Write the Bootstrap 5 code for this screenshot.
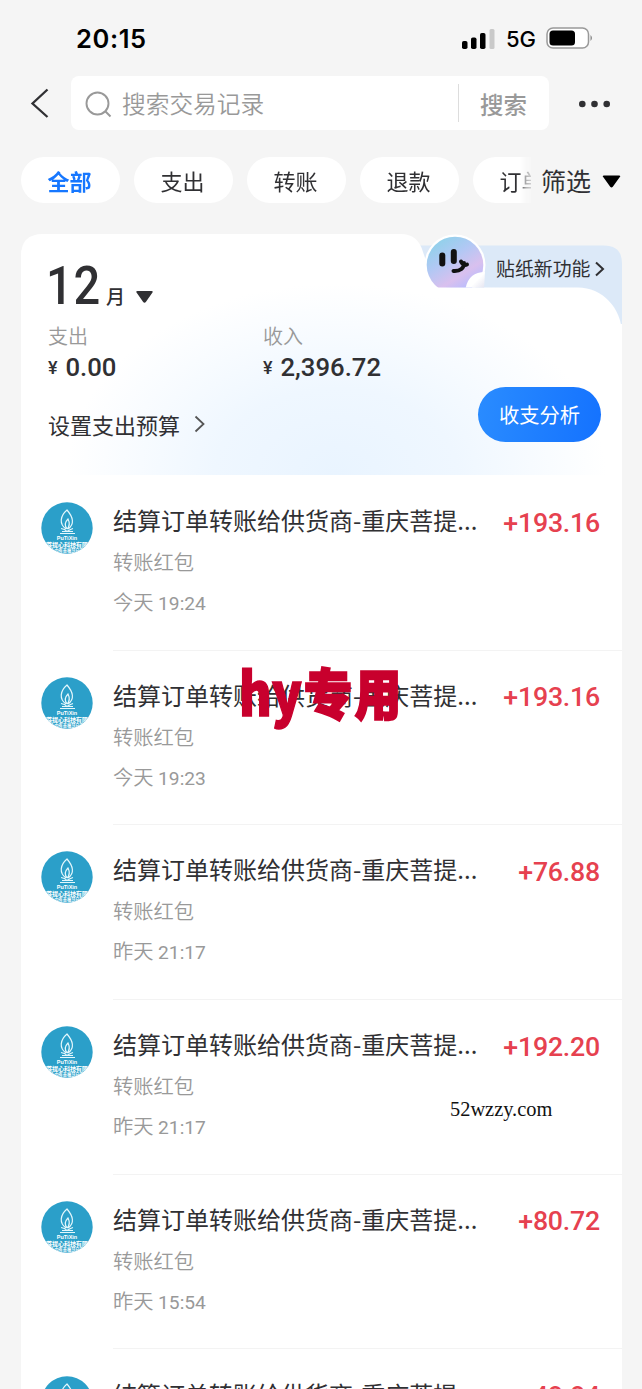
<!DOCTYPE html>
<html lang="zh-CN">
<head>
<meta charset="utf-8">
<meta name="viewport" content="width=device-width, initial-scale=1">
<title>账单</title>
<link href="https://cdn.jsdelivr.net/npm/bootstrap@5.3.0/dist/css/bootstrap.min.css" rel="stylesheet">
<style>
html,body{height:1389px;overflow:hidden}
body{background:#f5f5f5;color:#303033;font-family:"Noto Sans CJK SC",sans-serif;line-height:1}
svg{display:block;flex:none}
.phone{width:642px;height:1389px}
.clock{font:600 25.5px/30px Inter,sans-serif;color:#000;letter-spacing:.6px}
.net{font:500 22px/30px Inter,sans-serif;color:#000;margin-left:11px;width:40px}
.statusbar{height:76px;padding:24px 48px 0 76px}
.searchrow{height:54px;padding-left:30px}
.searchbox{width:478px;height:54px;border-radius:8px;margin-left:22px;color:#999}
.hint{font-size:23.7px;font-weight:350;color:#999;margin:2px 0 0 9px}
.vline{width:1px;height:38px;background:#ddd}
.go{font-size:23.5px;font-weight:500;color:#999;margin:4px 22px 0 21px}
.tabs-row{height:46px;margin-top:27px;padding-left:21px}
.tabs-clip{width:510px;gap:14px;-webkit-mask-image:linear-gradient(90deg,#000 498px,rgba(0,0,0,.35) 505px,rgba(0,0,0,.2) 510px);mask-image:linear-gradient(90deg,#000 498px,rgba(0,0,0,.35) 505px,rgba(0,0,0,.2) 510px)}
.tab{width:99px;height:46px;font-size:22px;background:#fff;padding:0 2px 1px 0}
.tab.on{color:#1677ff;font-weight:700}
.filter{font-size:25px;margin-left:10px}
.sheet{width:601px;margin:30.5px 0 0 21px;background:#fff;border-radius:22px 0 0 0}
.summary{height:241px}
.summary-bg{left:0;top:0}
.month{height:48px;margin:28px 0 0 25px}
.num{font-family:Roboto,sans-serif;font-weight:500}
.m-num{font-size:54px;line-height:48px;letter-spacing:1px;width:60px;transform:scaleX(.87);transform-origin:0 0}
.m-unit{font-size:19px;line-height:20px;font-weight:500;margin-bottom:4px}
.tip{left:475px;top:21px;font-size:18.9px;line-height:26px;white-space:nowrap}
.cap{font-size:20px;line-height:24px;color:#999;font-weight:350}
.sum{font-size:25.7px;line-height:30px;margin-top:4px}
.yen{font:500 18px/30px Roboto,sans-serif;width:17.5px;padding-top:1px}
.budget{font-size:22px;line-height:28px;margin:27.500px 0 0 27px}
.analysis{left:457px;top:153.5px;width:123px;height:55px;font-size:20.3px;color:#fff;background:linear-gradient(100deg,#2a8cff,#1472ff)}
.bill{height:174.7px;padding:27.6px 22px 0 19.6px}
.bill .info{margin-left:20.4px;flex:1}
.bill .ttl{font-size:24px;line-height:36px}
.bill .sub{font-size:20.3px;line-height:28px;color:#999;font-weight:350}
.bill .clk{font:400 19.2px/28px Roboto,sans-serif}
.bill .amt{font-size:26.7px;line-height:36px;color:#e6414f;letter-spacing:-.2px;margin-top:2.6px;height:33px}
.rule{left:92px;right:0;bottom:-1.5px;height:1px;background:#f3f3f3}
.stamp{left:239px;top:659px}
.site{left:450px;top:1096px;font:20.4px/26px "Liberation Serif",serif;color:#111}
</style>
</head>
<body>
<main class="phone position-relative overflow-hidden">
<header class="statusbar d-flex justify-content-between align-items-start">
  <div class="clock">20:15</div>
  <div class="d-flex align-items-center">
    <svg width="33" height="21" viewBox="0 0 33 21"><g fill="#000"><rect y="12" width="5.5" height="8" rx="1.8"/><rect x="9" y="8.500" width="5.5" height="11.5" rx="1.8"/><rect x="18" y="4" width="5.5" height="16" rx="1.8"/></g><rect x="27.500" width="5" height="20" rx="1.500" fill="#c9c9c9"/></svg>
    <div class="net">5G</div>
    <svg width="48" height="24" viewBox="0 0 48 24"><rect x="1" y="1" width="41.500" height="20" rx="6" fill="#fff" stroke="#999" stroke-width="1.500"/><rect x="3.500" y="3.500" width="25.500" height="15" rx="3.500"/><path d="M44.500 8q3 3 0 6z" fill="#888"/></svg>
  </div>
</header>

<div class="searchrow d-flex align-items-center">
  <svg width="19" height="30" viewBox="0 0 19 30" fill="none" stroke="#303033" stroke-width="2.300"><path d="M17.500 1.500 2.500 15.500l15 13.500"/></svg>
  <div class="searchbox bg-white d-flex align-items-center">
    <svg style="margin:3px 0 0 14px" width="28" height="28" viewBox="0 0 28 28" fill="none" stroke="#999" stroke-width="1.900"><circle cx="12.500" cy="12.500" r="11"/><path d="m20.500 20.500 5 5"/></svg>
    <span class="hint">搜索交易记录</span>
    <span class="vline ms-auto"></span>
    <span class="go">搜索</span>
  </div>
  <svg style="margin:1px 0 0 29px" width="34" height="8" fill="#303033"><circle cx="4.300" cy="4" r="3.300"/><circle cx="16.500" cy="4" r="3.300"/><circle cx="28.700" cy="4" r="3.300"/></svg>
</div>

<nav class="tabs-row d-flex align-items-center">
  <div class="tabs-clip d-flex overflow-hidden">
    <span class="tab on rounded-pill d-flex flex-shrink-0 align-items-center justify-content-center">全部</span>
    <span class="tab rounded-pill d-flex flex-shrink-0 align-items-center justify-content-center">支出</span>
    <span class="tab rounded-pill d-flex flex-shrink-0 align-items-center justify-content-center">转账</span>
    <span class="tab rounded-pill d-flex flex-shrink-0 align-items-center justify-content-center">退款</span>
    <span class="tab rounded-pill d-flex flex-shrink-0 align-items-center justify-content-center">订单</span>
  </div>
  <span class="filter">筛选</span>
  <svg style="margin:2px 0 0 11px" width="19" height="13" viewBox="0 0 19 13"><path d="M2 .5h15q2 0 .8 1.600l-7 9.600q-1.300 1.400-2.600 0l-7-9.600Q0 .5 2 .5z"/></svg>
</nav>

<section class="sheet position-relative">
  <div class="summary position-relative">
    <svg class="summary-bg position-absolute" width="601" height="241" viewBox="0 0 601 241">
      <defs>
        <radialGradient id="glow" cx="315" cy="241" r="225" gradientUnits="userSpaceOnUse" gradientTransform="matrix(1.2 0 0 .85 -63 36)"><stop offset="0" stop-color="#e9f4ff"/><stop offset=".45" stop-color="#eff7ff"/><stop offset="1" stop-color="#fff"/></radialGradient>
        <linearGradient id="ball" x1="0" y1="0" x2=".65" y2="1"><stop offset="0" stop-color="#83d5e6"/><stop offset=".45" stop-color="#b1c8f4"/><stop offset=".75" stop-color="#d9c0ee"/><stop offset="1" stop-color="#b5bcff"/></linearGradient>
        <linearGradient id="curl" x1="0" y1="0" x2="1" y2="1"><stop offset="0" stop-color="#fff"/><stop offset=".5" stop-color="#fff"/><stop offset="1" stop-color="#dcdcec"/></linearGradient>
        <clipPath id="cut"><path d="M390 0h100v53.500H390z"/></clipPath>
      </defs>
      <path d="M370 0H601V90H370z" fill="#f5f5f5"/>
      <path d="M385 11.500H583q18 0 18 18V90H385z" fill="#dce9f8"/>
      <path d="M0 241V22Q0 0 22 0H380Q397 0 402 18L409 38Q414 53.500 430 53.500H557C581 53.500 601 74 601 100V241z" fill="url(#glow)"/>
      <g clip-path="url(#cut)"><circle cx="434" cy="31" r="30.500" fill="#fff"/><circle cx="434" cy="31" r="28.300" fill="url(#ball)"/><path d="M444 58q2-20 20-20l-1 18z" fill="url(#curl)"/></g>
      <g fill="none" stroke="#111" stroke-linecap="round"><path d="M421.300 21.500v8M432.800 18v9" stroke-width="6"/><path d="M432.500 37c7 .5 10.500-3 10.500-8M440 27.500q2.500 4.500 6 3" stroke-width="4"/></g>
      <path d="m575 28.500 7 6.500-7 6.500" fill="none" stroke="#303033" stroke-width="2"/>
    </svg>
    <div class="position-relative d-flex flex-column" style="padding-top:.1px">
      <div class="month d-flex align-items-end">
        <span class="num m-num">12</span>
        <span class="m-unit">月</span>
        <svg style="margin:0 0 6px 11px" width="17" height="13" viewBox="0 0 17 13"><path fill="#303033" d="M1.500 0h14q2 0 .8 1.700l-6.300 9q-1.500 2-3 0l-6.300-9Q-.5 0 1.500 0z"/></svg>
      </div>
      <div class="d-flex" style="margin:14px 0 0 27px">
        <div style="width:215px"><div class="cap">支出</div><div class="sum num d-flex"><span class="yen">¥</span>0.00</div></div>
        <div><div class="cap">收入</div><div class="sum num d-flex"><span class="yen">¥</span>2,396.72</div></div>
      </div>
      <div class="budget d-flex align-items-center">设置支出预算<svg style="margin-left:14px" width="12" height="18" viewBox="0 0 12 18" fill="none" stroke="#555" stroke-width="1.800"><path d="m1.500 1.500 8 7.500-8 7.500"/></svg></div>
    </div>
    <span class="tip position-absolute">贴纸新功能</span>
    <button class="btn analysis position-absolute rounded-pill border-0 p-0">收支分析</button>
  </div>
  <div id="bills"></div>
</section>

<svg class="stamp position-absolute" width="170" height="80" viewBox="0 0 170 80" fill="#c8002d" stroke="#c8002d" font-family="Noto Sans CJK SC" font-weight="900"><text x="0" y="57" font-size="59" stroke-width="1.500" textLength="63" lengthAdjust="spacingAndGlyphs">hy</text><text x="65" y="56" font-size="54" stroke-width="2.500" textLength="48" lengthAdjust="spacingAndGlyphs">专</text><text x="116" y="56" font-size="54" stroke-width="2.500" textLength="46" lengthAdjust="spacingAndGlyphs">用</text></svg>
<div class="site position-absolute">52wzzy.com</div>
</main>

<template id="logo">
<svg width="52" height="52" viewBox="0 0 52 52"><defs><clipPath id="disc"><circle cx="26" cy="26" r="25.700"/></clipPath></defs><circle cx="26" cy="26" r="25.700" fill="#2b9fc9"/><g fill="none" stroke="#e4f7fc" stroke-width="1.200"><path d="M25 27c-7-5-6-13 1-19 6 7 8 14 1 19M26 27c-3-4-2-7 1-10 2 4 2 7-1 10M20 26.500q4 .5 6 3 3-2 6-3M21 29.500h11M19 31.500h15"/></g><g clip-path="url(#disc)" fill="#fff" text-anchor="middle"><text x="26" y="37.500" font-family="Liberation Sans" font-weight="700" font-size="5.500">PuTiXin</text><text x="26" y="44.800" font-family="Noto Sans CJK SC" font-weight="700" font-size="6.200" textLength="54">庆菩提心科技有限公</text><text x="26" y="49.500" font-family="Noto Sans CJK SC" font-weight="700" font-size="4.200">心中有善福慧自来</text></g></svg>
</template>
<script>
const rows=[["+193.16","今天","19:24"],["+193.16","今天","19:23"],["+76.88","昨天","21:17"],["+192.20","昨天","21:17"],["+80.72","昨天","15:54"],["+48.84","昨天","15:20"]];
const logo=document.getElementById("logo").innerHTML;
document.getElementById("bills").innerHTML=rows.map(r=>`<article class="bill position-relative d-flex">${logo}<div class="info"><div class="d-flex justify-content-between"><span class="ttl">结算订单转账给供货商-重庆菩提...</span><span class="amt num">${r[0]}</span></div><div class="sub" style="margin-top:9px">转账红包</div><div class="sub" style="margin-top:12px">${r[1]} <span class="clk">${r[2]}</span></div></div><span class="rule position-absolute"></span></article>`).join("");
</script>
<script src="https://cdn.jsdelivr.net/npm/bootstrap@5.3.0/dist/js/bootstrap.bundle.min.js"></script>
</body>
</html>
